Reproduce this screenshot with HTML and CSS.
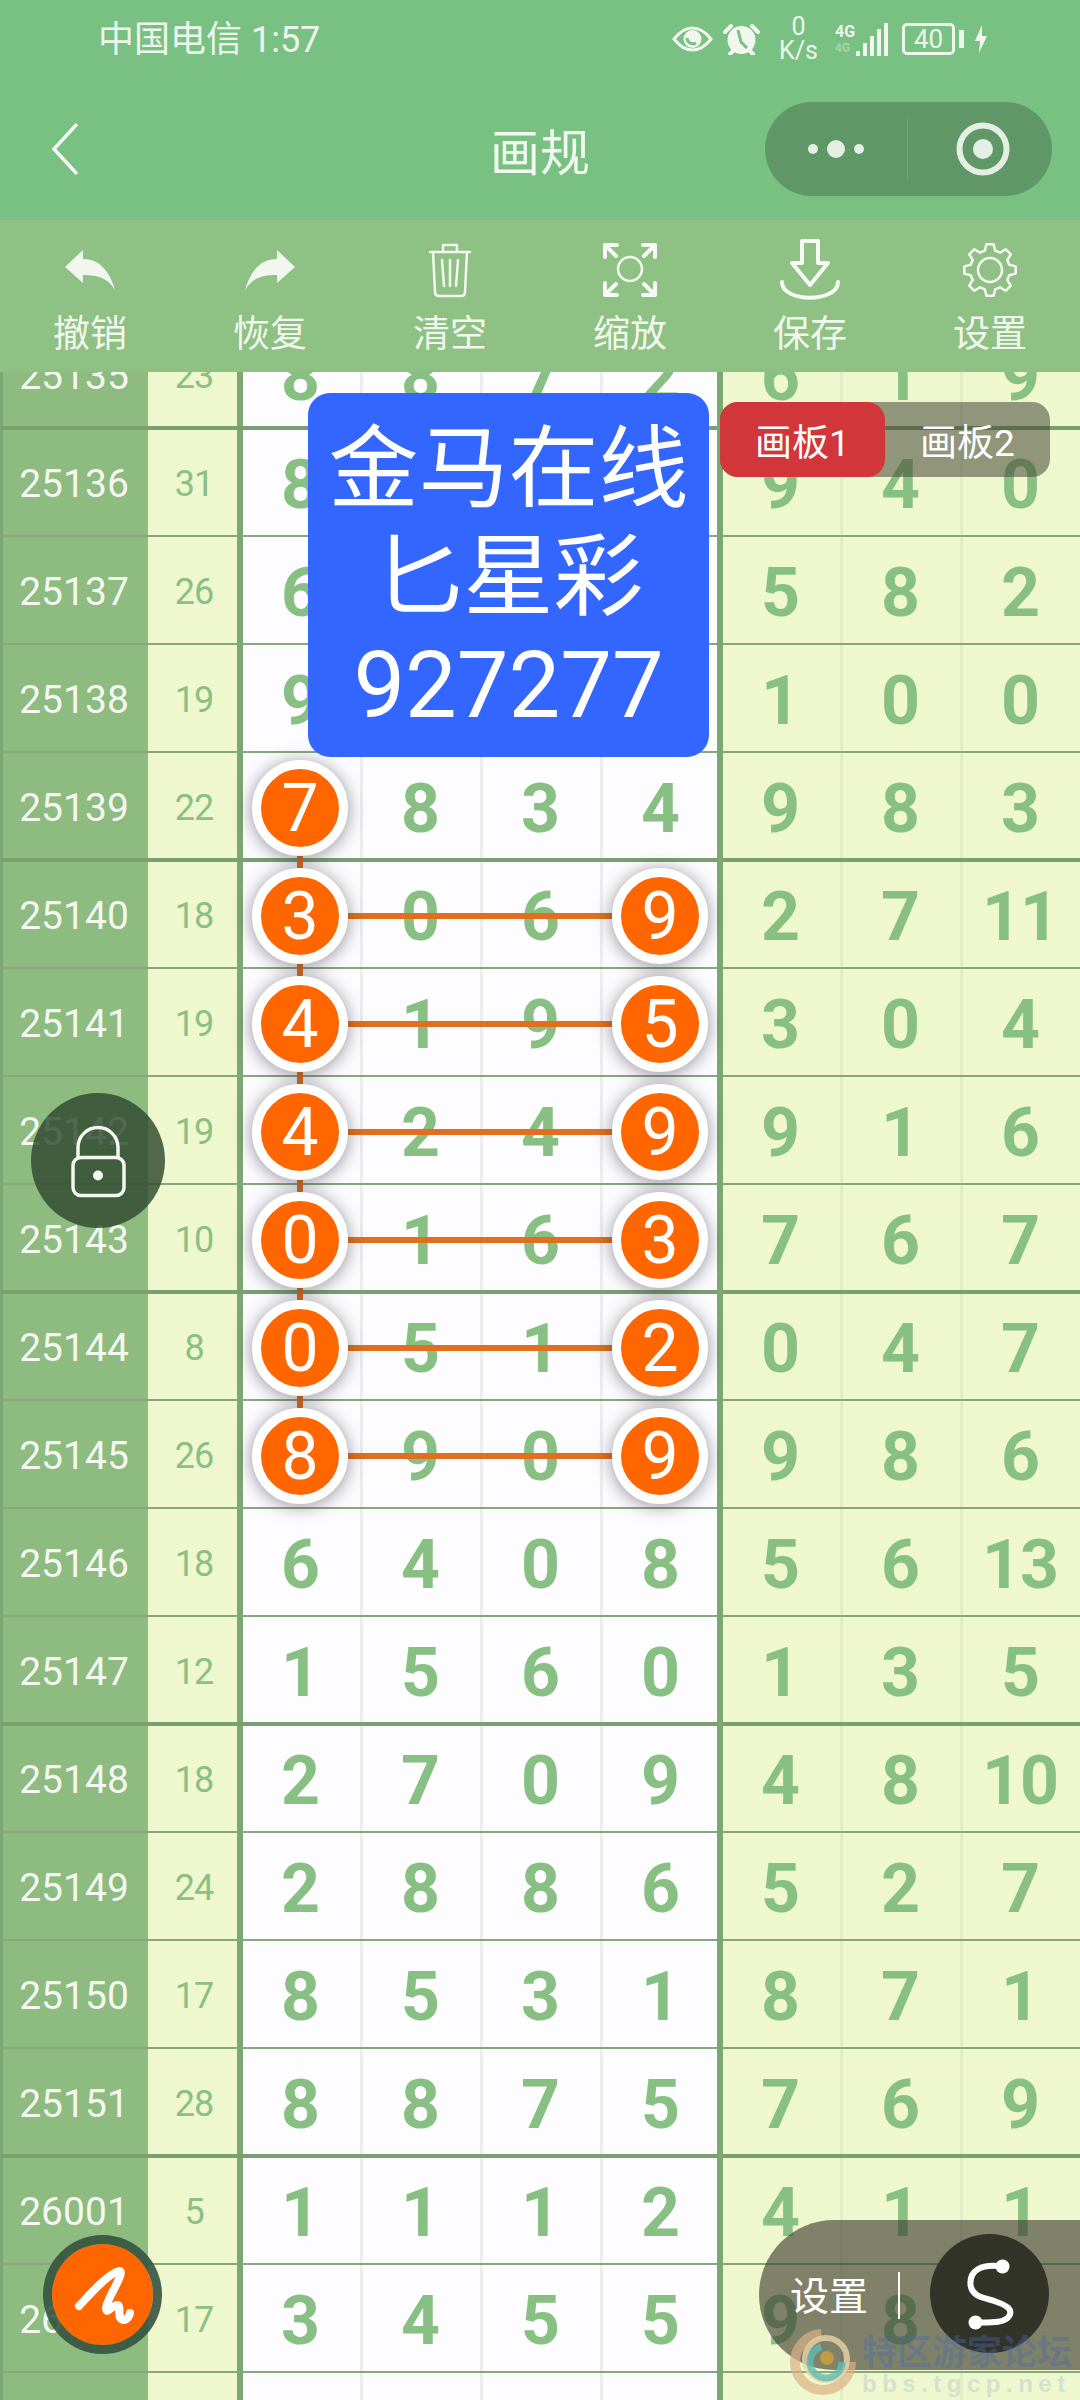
FILE: index.html
```html
<!DOCTYPE html>
<html lang="zh-CN">
<head>
<meta charset="utf-8">
<title>画规</title>
<link rel="stylesheet" href="styles.css">
</head>
<body>
<div class="phone">
  <header class="top">
    <div class="status">
      <div class="carrier">中国电信 1:57</div>
      <div class="sysicons">
        <svg class="eye" viewBox="0 0 41 26"><path class="st" d="M2 13C9 4 15 2 20.500 2S32 4 39 13C32 22 26 24 20.500 24S9 22 2 13Z"/><circle class="fl" cx="20.500" cy="13" r="9"/><path class="cut" d="M15 12a6 6 0 0 0 9 5"/></svg>
        <svg class="alarm" viewBox="0 0 37 32"><circle class="fl" cx="18.500" cy="17" r="14"/><path class="cuth" d="M15 7l3 12 6 6"/><path class="st2" d="M2 9l6-6M35 9l-6-6M7 31l3-3M30 31l-3-3"/></svg>
        <div class="net"><span>0</span><span>K/s</span></div>
        <div class="signal">
          <div class="gen"><span class="g1">4G</span><span class="g2">4G</span></div>
          <svg class="bars" viewBox="0 0 33 33"><rect class="fl" x="1" y="28" width="4" height="5"/><rect class="fl" x="8" y="20" width="4" height="13"/><rect class="fl" x="15" y="13" width="4" height="20"/><rect class="fl" x="22" y="6" width="4" height="27"/><rect class="fl" x="29" y="0" width="4" height="33"/></svg>
        </div>
        <div class="batt"><div class="cellbox">40</div><div class="nub"></div></div>
        <svg class="bolt" viewBox="0 0 14 28"><path class="fl" d="M8 0L1 16H6L5 28L13 11H8Z"/></svg>
      </div>
    </div>
    <div class="navbar">
      <svg class="back" viewBox="0 0 30 54"><path d="M27 2L4 27L27 52"/></svg>
      <h1 class="title">画规</h1>
      <div class="capsule">
        <div class="cap-a"><svg class="dots" viewBox="0 0 56 20"><circle cx="5" cy="10" r="5"/><circle cx="28" cy="10" r="9"/><circle cx="51" cy="10" r="5"/></svg></div>
        <div class="cap-b"><svg class="target" viewBox="0 0 54 54"><circle class="ring" cx="27" cy="27" r="23.500"/><circle cx="27" cy="27" r="10"/></svg></div>
      </div>
    </div>
  </header>

  <nav class="tools">
    <div class="tool"><svg class="ti" viewBox="0 -6 60 64"><path class="fl" d="M5 25L23 8V17C40 17 50 30 55 48C48 36 38 33 23 33V41Z"/></svg><span>撤销</span></div>
    <div class="tool"><svg class="ti" viewBox="0 -6 60 64"><path class="fl" d="M55 25L37 8V17C20 17 10 30 5 48C12 36 22 33 37 33V41Z"/></svg><span>恢复</span></div>
    <div class="tool"><svg class="ti" viewBox="0 -6 60 64"><path class="st3" d="M10 10H50M23 10V3H37V10M13 10L15 50Q15 54 19 54H41Q45 54 45 50L47 10M22 18L24 44M30 18V44M38 18L36 44"/></svg><span>清空</span></div>
    <div class="tool"><svg class="ti" viewBox="0 -6 60 64"><circle class="st3" cx="30" cy="27" r="12"/><path class="st4" d="M5 15V3H17M5 3L16 14M43 3H55V15M55 3L44 14M5 41V53H17M5 53L16 42M43 53H55V41M55 53L44 42"/></svg><span>缩放</span></div>
    <div class="tool"><svg class="ti" viewBox="0 0 60 64"><path class="st4" d="M22 5H38V27H48L30 49L12 27H22Z"/><path class="st4" d="M2 46C2 67 58 67 58 46"/></svg><span>保存</span></div>
    <div class="tool"><svg class="ti" viewBox="0 0 60 64"><g transform="translate(30 34)"><circle class="st3" r="12"/><polygon class="st3" points="3.600,-25.700 5.200,-19.300 10,-17.300 15.600,-20.800 20.800,-15.600 17.300,-10 19.300,-5.200 25.700,-3.600 25.700,3.600 19.300,5.200 17.300,10 20.800,15.600 15.600,20.800 10,17.300 5.200,19.300 3.600,25.700 -3.600,25.700 -5.200,19.300 -10,17.300 -15.600,20.800 -20.800,15.600 -17.300,10 -19.300,5.200 -25.700,3.600 -25.700,-3.600 -19.300,-5.200 -17.300,-10 -20.800,-15.600 -15.600,-20.800 -10,-17.300 -5.200,-19.300 -3.600,-25.700"/></g></svg><span>设置</span></div>
  </nav>

  <main class="sheet">
    <div class="grid">
      <div class="row"><div class="id">25135</div><div class="sum">23</div><div class="w">8</div><div class="w">8</div><div class="w">7</div><div class="w">2</div><div class="c">6</div><div class="c">1</div><div class="c">9</div></div>
      <div class="row"><div class="id">25136</div><div class="sum">31</div><div class="w">8</div><div class="w"></div><div class="w"></div><div class="w"></div><div class="c">9</div><div class="c">4</div><div class="c">0</div></div>
      <div class="row"><div class="id">25137</div><div class="sum">26</div><div class="w">6</div><div class="w"></div><div class="w"></div><div class="w"></div><div class="c">5</div><div class="c">8</div><div class="c">2</div></div>
      <div class="row"><div class="id">25138</div><div class="sum">19</div><div class="w">9</div><div class="w"></div><div class="w"></div><div class="w"></div><div class="c">1</div><div class="c">0</div><div class="c">0</div></div>
      <div class="row"><div class="id">25139</div><div class="sum">22</div><div class="w"><span class="ball">7</span></div><div class="w">8</div><div class="w">3</div><div class="w">4</div><div class="c">9</div><div class="c">8</div><div class="c">3</div></div>
      <div class="row"><div class="id">25140</div><div class="sum">18</div><div class="w"><span class="ball">3</span></div><div class="w">0</div><div class="w">6</div><div class="w"><span class="ball">9</span></div><div class="c">2</div><div class="c">7</div><div class="c">11</div></div>
      <div class="row"><div class="id">25141</div><div class="sum">19</div><div class="w"><span class="ball">4</span></div><div class="w">1</div><div class="w">9</div><div class="w"><span class="ball">5</span></div><div class="c">3</div><div class="c">0</div><div class="c">4</div></div>
      <div class="row"><div class="id">25142</div><div class="sum">19</div><div class="w"><span class="ball">4</span></div><div class="w">2</div><div class="w">4</div><div class="w"><span class="ball">9</span></div><div class="c">9</div><div class="c">1</div><div class="c">6</div></div>
      <div class="row"><div class="id">25143</div><div class="sum">10</div><div class="w"><span class="ball">0</span></div><div class="w">1</div><div class="w">6</div><div class="w"><span class="ball">3</span></div><div class="c">7</div><div class="c">6</div><div class="c">7</div></div>
      <div class="row"><div class="id">25144</div><div class="sum">8</div><div class="w"><span class="ball">0</span></div><div class="w">5</div><div class="w">1</div><div class="w"><span class="ball">2</span></div><div class="c">0</div><div class="c">4</div><div class="c">7</div></div>
      <div class="row"><div class="id">25145</div><div class="sum">26</div><div class="w"><span class="ball">8</span></div><div class="w">9</div><div class="w">0</div><div class="w"><span class="ball">9</span></div><div class="c">9</div><div class="c">8</div><div class="c">6</div></div>
      <div class="row"><div class="id">25146</div><div class="sum">18</div><div class="w">6</div><div class="w">4</div><div class="w">0</div><div class="w">8</div><div class="c">5</div><div class="c">6</div><div class="c">13</div></div>
      <div class="row"><div class="id">25147</div><div class="sum">12</div><div class="w">1</div><div class="w">5</div><div class="w">6</div><div class="w">0</div><div class="c">1</div><div class="c">3</div><div class="c">5</div></div>
      <div class="row"><div class="id">25148</div><div class="sum">18</div><div class="w">2</div><div class="w">7</div><div class="w">0</div><div class="w">9</div><div class="c">4</div><div class="c">8</div><div class="c">10</div></div>
      <div class="row"><div class="id">25149</div><div class="sum">24</div><div class="w">2</div><div class="w">8</div><div class="w">8</div><div class="w">6</div><div class="c">5</div><div class="c">2</div><div class="c">7</div></div>
      <div class="row"><div class="id">25150</div><div class="sum">17</div><div class="w">8</div><div class="w">5</div><div class="w">3</div><div class="w">1</div><div class="c">8</div><div class="c">7</div><div class="c">1</div></div>
      <div class="row"><div class="id">25151</div><div class="sum">28</div><div class="w">8</div><div class="w">8</div><div class="w">7</div><div class="w">5</div><div class="c">7</div><div class="c">6</div><div class="c">9</div></div>
      <div class="row"><div class="id">26001</div><div class="sum">5</div><div class="w">1</div><div class="w">1</div><div class="w">1</div><div class="w">2</div><div class="c">4</div><div class="c">1</div><div class="c">1</div></div>
      <div class="row"><div class="id">26002</div><div class="sum">17</div><div class="w">3</div><div class="w">4</div><div class="w">5</div><div class="w">5</div><div class="c">9</div><div class="c">8</div><div class="c">9</div></div>
      <div class="row"><div class="id"></div><div class="sum"></div><div class="w"></div><div class="w"></div><div class="w"></div><div class="w"></div><div class="c"></div><div class="c"></div><div class="c"></div></div>
    </div>

    <svg class="links" viewBox="0 0 1080 2028">
      <path d="M300 436V1084"/>
      <path d="M300 544H660M300 652H660M300 760H660M300 868H660M300 976H660M300 1084H660"/>
    </svg>

    <div class="notice">
      <div>金马在线</div>
      <div>匕星彩</div>
      <div class="notice-num">927277</div>
    </div>

    <div class="tabs">
      <div class="tab tab-on">画板1</div>
      <div class="tab">画板2</div>
    </div>

    <div class="lock">
      <svg viewBox="0 0 134 134"><rect x="42" y="64" width="51" height="38" rx="8"/><path d="M47 64V54A20 20 0 0 1 87 54V64"/><circle class="lockdot" cx="67" cy="82" r="5"/></svg>
    </div>

    <div class="pen">
      <svg viewBox="52 64 101 101"><path d="M79 126C92 112 108 94 119 91C127 90 106 120 106 128C106 136 113 124 118 125C122 127 116 138 123 140C128 140 130 134 130 133"/></svg>
    </div>

    <div class="dock">
      <span class="dock-label">设置</span>
      <span class="dock-bar"></span>
      <div class="dock-btn">
        <svg viewBox="250.500 54.500 119 119"><path d="M323 87C300 84 290 92 291 105C292 118 306 118 316 122C328 126 333 130 330 136C326 144 310 143 296 143"/><circle cx="323" cy="87" r="7"/><circle cx="296" cy="143" r="7"/></svg>
      </div>
    </div>

    <div class="mark">
      <svg class="mark-logo" viewBox="0 0 68 68">
        <circle cx="33" cy="34" r="28" fill="none" stroke="#dcb084" stroke-width="10" stroke-dasharray="130 50" opacity=".7"/>
        <circle cx="36" cy="31" r="21" fill="none" stroke="#e8d2a8" stroke-width="6" opacity=".8"/>
        <circle cx="36" cy="34" r="16" fill="none" stroke="#5fbcb4" stroke-width="7" stroke-dasharray="70 30" opacity=".8"/>
        <circle cx="37" cy="30" r="7" fill="#c9a23c" opacity=".85"/>
      </svg>
      <div class="mark-text">
        <div class="mark-cn">特区游家论坛</div>
        <div class="mark-en">bbs.tgcp.net</div>
      </div>
    </div>
  </main>
</div>
</body>
</html>
```
FILE: styles.css
```css
* { box-sizing: border-box; }
html, body { margin: 0; padding: 0; }
body { font-family: Roboto, "Noto Sans CJK SC", sans-serif; background: #79c083; }

.phone {
  position: relative;
  display: flex;
  flex-direction: column;
  width: 1080px;
  height: 2400px;
  overflow: hidden;
}

/* shared svg paints */
.fl { fill: #f1f7ef; }
.st { fill: none; stroke: #f1f7ef; stroke-width: 3; }
.st2 { fill: none; stroke: #f1f7ef; stroke-width: 4; stroke-linecap: round; }
.st3 { fill: none; stroke: #f4f8f0; stroke-width: 2.500; stroke-linejoin: round; stroke-linecap: round; }
.st4 { fill: none; stroke: #f8faf5; stroke-width: 4; stroke-linejoin: round; stroke-linecap: round; }
.cut, .cuth { fill: none; stroke: #79c083; stroke-width: 3; }

/* header */
.top { height: 220px; background: #79c083; flex: none; }
.status {
  display: flex;
  align-items: center;
  justify-content: space-between;
  height: 78px;
  padding: 0 92px 0 98px;
}
.carrier { font-size: 36px; line-height: 78px; padding-top: 2px; color: #eef6ec; }
.sysicons { display: flex; align-items: center; }
.eye { width: 41px; height: 26px; margin-right: 10px; }
.alarm { width: 37px; height: 32px; margin-right: 20px; }
.net {
  display: flex;
  flex-direction: column;
  align-items: center;
  width: 37px;
  margin-right: 18px;
  font-size: 25px;
  line-height: 24px;
  color: #eef6ec;
}
.signal { display: flex; align-items: flex-end; width: 53px; height: 33px; margin-right: 14px; }
.gen { display: flex; flex-direction: column; width: 20px; height: 33px; }
.g1 { font-size: 16px; line-height: 17px; font-weight: 700; color: #eef6ec; }
.g2 { font-size: 12px; line-height: 16px; font-weight: 700; color: #a6d3ab; }
.bars { width: 33px; height: 33px; }
.batt { display: flex; align-items: center; margin-right: 10px; }
.cellbox {
  width: 53px;
  height: 32px;
  border: 3px solid #eef6ec;
  border-radius: 5px;
  font-size: 26px;
  line-height: 26px;
  text-align: center;
  color: #eef6ec;
}
.nub { width: 5px; height: 18px; margin-left: 4px; background: #eef6ec; }
.bolt { width: 14px; height: 28px; }

.navbar {
  position: relative;
  display: flex;
  align-items: center;
  height: 142px;
  padding: 0 28px 0 50px;
}
.back { width: 30px; height: 54px; }
.back path { fill: none; stroke: #f4f8f2; stroke-width: 3.500; }
.title {
  position: absolute;
  left: 0;
  right: 0;
  margin: 0;
  text-align: center;
  font-size: 50px;
  font-weight: 400;
  color: #f2f7f0;
}
.capsule {
  display: flex;
  align-items: center;
  width: 287px;
  height: 94px;
  margin-left: auto;
  border-radius: 47px;
  background: #5f9767;
}
.cap-a { display: flex; align-items: center; justify-content: center; width: 143px; height: 62px; border-right: 1px solid #6ba271; }
.cap-b { display: flex; align-items: center; justify-content: center; flex: 1; padding-left: 6px; }
.dots { width: 56px; height: 20px; fill: #e3efe3; }
.target { width: 54px; height: 54px; fill: #e3efe3; }
.target .ring { fill: none; stroke: #e3efe3; stroke-width: 6; }

/* toolbar */
.tools {
  display: grid;
  grid-template-columns: repeat(6, 180px);
  flex: none;
  height: 152px;
  padding-top: 16px;
  background: #8fc084;
}
.tool { display: flex; flex-direction: column; align-items: center; color: #f2f7ee; font-size: 37px; line-height: 52px; }
.tool span { margin-top: 9px; }
.ti { width: 60px; height: 64px; overflow: visible; }

/* sheet */
.sheet { position: relative; flex: 1; overflow: hidden; background: #8dbb80; }
.grid { margin-top: -52px; }
.sheet::before, .sheet::after {
  content: "";
  position: absolute;
  top: 0;
  bottom: 0;
  z-index: 1;
  width: 6px;
  background: #7da772;
}
.sheet::before { left: 237px; }
.sheet::after { left: 717px; }

.row {
  position: relative;
  display: grid;
  grid-template-columns: 148px 92px repeat(7, 120px);
  height: 108px;
}
.row::after {
  content: "";
  position: absolute;
  left: 0;
  right: 0;
  bottom: -1px;
  z-index: 1;
  height: 2px;
  background: #86a67d;
}
.row:nth-child(4n+1)::after { bottom: -2px; height: 4px; background: #7a9f70; }

.id, .sum, .w, .c { display: flex; align-items: center; justify-content: center; }
.id { background: #8dbb80; color: #f4f8f0; font-size: 39px; padding-top: 4px; box-shadow: inset 3px 0 0 #7da772; }
.sum { background: #eef7cd; color: #8cbf86; font-size: 36px; padding-top: 4px; letter-spacing: -1px; }
.w, .c { color: #88c084; font-size: 68px; font-weight: 700; letter-spacing: -1px; padding-top: 5px; }
.w { background: #fdfcfe; }
.c { background: #eef7cd; }
.w + .w { box-shadow: inset 3px 0 0 #ededf0; }
.c + .c { box-shadow: inset 3px 0 0 #e4edc8; }

.ball {
  position: relative;
  z-index: 2;
  display: flex;
  align-items: center;
  justify-content: center;
  width: 96px;
  height: 96px;
  margin-top: -1px;
  border: 9px solid #fff;
  border-radius: 50%;
  background: #ff6600;
  color: #fff;
  font-size: 66px;
  font-weight: 400;
  letter-spacing: 0;
  box-shadow: 0 2px 18px rgba(40, 40, 60, .5);
}

.links { position: absolute; left: 0; top: 0; z-index: 1; width: 1080px; height: 2028px; }
.links path { fill: none; stroke: #e0701f; stroke-width: 6; }

/* overlays */
.notice {
  position: absolute;
  left: 308px;
  top: 21px;
  z-index: 3;
  display: flex;
  flex-direction: column;
  align-items: center;
  justify-content: center;
  width: 401px;
  height: 364px;
  padding-top: 5px;
  border-radius: 22px;
  background: #3366ff;
  color: #fff;
  font-size: 90px;
  line-height: 108px;
}
.notice-num { font-size: 92px; font-weight: 400; }

.tabs {
  position: absolute;
  left: 720px;
  top: 30px;
  z-index: 3;
  display: flex;
  width: 330px;
  height: 75px;
  border-radius: 18px;
  background: rgba(70, 70, 55, .55);
}
.tab { display: flex; align-items: center; justify-content: center; width: 165px; color: #fff; font-size: 37px; border-radius: 18px; }
.tab-on { background: #d1373a; }

.lock {
  position: absolute;
  left: 31px;
  top: 721px;
  z-index: 3;
  width: 134px;
  height: 135px;
  border-radius: 50%;
  background: rgba(48, 72, 46, .82);
}
.lock svg { display: block; width: 134px; height: 135px; }
.lock rect, .lock path { fill: none; stroke: #f4f6f2; stroke-width: 3.500; }
.lockdot { fill: #f4f6f2; }

.pen {
  position: absolute;
  left: 43px;
  top: 1863px;
  z-index: 3;
  width: 119px;
  height: 119px;
  border: 9px solid rgba(50, 80, 60, .88);
  border-radius: 50%;
  background: #ff6600;
  background-clip: padding-box;
}
.pen svg { display: block; width: 101px; height: 101px; }
.pen path { fill: none; stroke: #fff; stroke-width: 8; stroke-linecap: round; stroke-linejoin: round; }

.dock {
  position: absolute;
  left: 759px;
  top: 1848px;
  z-index: 3;
  display: flex;
  align-items: center;
  width: 321px;
  height: 150px;
  padding: 0 0 4px 31px;
  border-radius: 75px 0 0 75px;
  background: rgba(58, 58, 44, .62);
}
.dock-label { width: 78px; margin-top: 8px; color: #fff; font-size: 39px; line-height: 50px; }
.dock-bar { width: 2px; height: 47px; margin: 5px 0 0 30px; background: #fff; }
.dock-btn {
  width: 119px;
  height: 119px;
  margin-left: 30px;
  border-radius: 50%;
  background: #32342a;
}
.dock-btn svg { display: block; width: 119px; height: 119px; }
.dock-btn path { fill: none; stroke: #fff; stroke-width: 6; stroke-linecap: round; }
.dock-btn circle { fill: #fff; }

.mark {
  position: absolute;
  left: 790px;
  top: 1956px;
  z-index: 4;
  display: flex;
  align-items: flex-start;
  pointer-events: none;
}
.mark-logo { width: 68px; height: 68px; flex: none; }
.mark-text { margin: 8px 0 0 4px; }
.mark-cn { font-size: 35px; line-height: 36px; font-weight: 700; color: rgba(74, 106, 170, .42); white-space: nowrap; }
.mark-en { font-family: "Liberation Sans", sans-serif; font-size: 24px; line-height: 24px; font-weight: 700; letter-spacing: 5.500px; color: rgba(120, 150, 205, .24); white-space: nowrap; }
```
